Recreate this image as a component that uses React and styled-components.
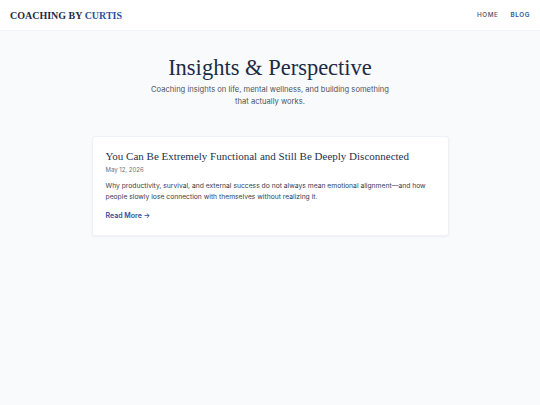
import React from "react";
import styled, { createGlobalStyle } from "styled-components";

const GlobalStyle = createGlobalStyle`
  html, body {
    margin: 0;
    padding: 0;
    background: #f8fafc;
    font-family: Inter, "Noto Sans", sans-serif;
    color: #1f2937;
  }
`;

const Page = styled.div`
  min-height: 405px;
  background: #f8fafc;
`;

const Header = styled.header`
  height: 30px;
  background: #ffffff;
  border-bottom: 1px solid #f1f3f6;
  display: flex;
  align-items: center;
  justify-content: space-between;
  padding: 0 10px;
`;

const Logo = styled.div`
  font-family: "Liberation Serif", "DejaVu Serif", serif;
  font-weight: 700;
  font-size: 10px;
  color: #1e2b47;
  span {
    color: #2d4f9e;
  }
`;

const Nav = styled.nav`
  display: flex;
  gap: 12px;
`;

const NavLink = styled.a`
  font-size: 6.3px;
  letter-spacing: 0.6px;
  text-transform: uppercase;
  font-weight: ${(p) => (p.$active ? 600 : 500)};
  color: ${(p) => (p.$active ? "#2d4f9e" : "#4b5563")};
  text-decoration: none;
`;

const Hero = styled.section`
  text-align: center;
  padding-top: 23px;
`;

const Title = styled.h1`
  margin: 0;
  font-family: "Liberation Serif", "DejaVu Serif", serif;
  font-weight: 400;
  font-size: 22.5px;
  line-height: 28px;
  color: #1e2b47;
`;

const Subtitle = styled.p`
  margin: 2px auto 0;
  width: 250px;
  font-size: 7.6px;
  line-height: 12px;
  color: #4b5563;
`;

const List = styled.div`
  display: flex;
  justify-content: center;
  padding-top: 28px;
`;

const Card = styled.article`
  width: 357px;
  box-sizing: border-box;
  background: #ffffff;
  border: 1px solid #eef1f5;
  border-radius: 3px;
  box-shadow: 0 1px 3px rgba(15, 23, 42, 0.05);
  padding: 12px 13px 13px;
`;

const CardTitle = styled.h2`
  margin: 0;
  font-family: "Liberation Serif", "DejaVu Serif", serif;
  font-weight: 400;
  font-size: 11px;
  line-height: 14px;
  color: #25324d;
`;

const Date = styled.div`
  margin-top: 2px;
  font-size: 6px;
  line-height: 9px;
  color: #6b7280;
`;

const Excerpt = styled.p`
  margin: 6px 0 0;
  font-size: 6.75px;
  line-height: 11px;
  color: #374151;
`;

const ReadMore = styled.a`
  display: inline-block;
  margin-top: 7.5px;
  font-size: 7px;
  line-height: 10px;
  font-weight: 600;
  color: #2d4f9e;
  text-decoration: none;
`;

export default function App() {
  return (
    <Page>
      <GlobalStyle />
      <Header>
        <Logo>
          COACHING BY <span>CURTIS</span>
        </Logo>
        <Nav>
          <NavLink href="#">Home</NavLink>
          <NavLink href="#" $active>
            Blog
          </NavLink>
        </Nav>
      </Header>
      <Hero>
        <Title>Insights &amp; Perspective</Title>
        <Subtitle>
          Coaching insights on life, mental wellness, and building something
          that actually works.
        </Subtitle>
      </Hero>
      <List>
        <Card>
          <CardTitle>
            You Can Be Extremely Functional and Still Be Deeply Disconnected
          </CardTitle>
          <Date>May 12, 2026</Date>
          <Excerpt>
            Why productivity, survival, and external success do not always mean
            emotional alignment—and how people slowly lose connection with
            themselves without realizing it.
          </Excerpt>
          <ReadMore href="#">Read More →</ReadMore>
        </Card>
      </List>
    </Page>
  );
}
